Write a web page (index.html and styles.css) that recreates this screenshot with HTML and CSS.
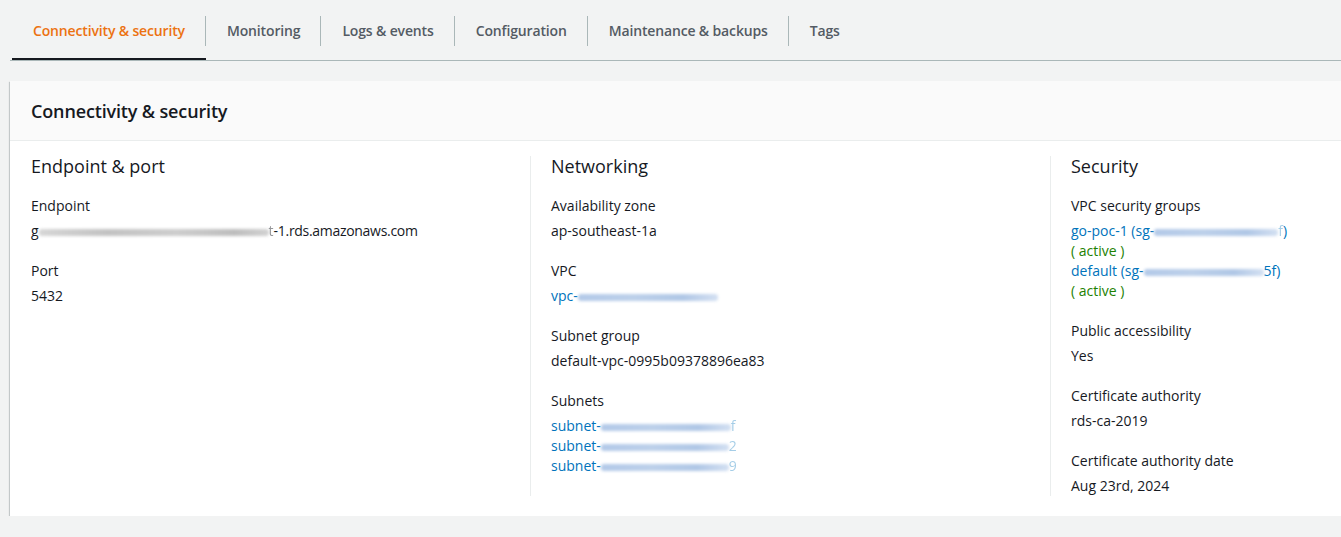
FILE: index.html
```html
<!DOCTYPE html>
<html lang="en">
<head>
<meta charset="utf-8">
<title>Connectivity &amp; security</title>
<link rel="stylesheet" href="styles.css">
</head>
<body>
<div class="page">
  <nav class="tabs">
    <div class="tab active"><span class="tab-label">Connectivity &amp; security</span></div>
    <div class="tab"><span class="tab-label">Monitoring</span></div>
    <div class="tab"><span class="tab-label">Logs &amp; events</span></div>
    <div class="tab"><span class="tab-label">Configuration</span></div>
    <div class="tab"><span class="tab-label">Maintenance &amp; backups</span></div>
    <div class="tab"><span class="tab-label last">Tags</span></div>
  </nav>

  <section class="card">
    <header class="card-header"><h2 class="card-title">Connectivity &amp; security</h2></header>
    <div class="card-body">
      <div class="col">
        <h3 class="col-title">Endpoint &amp; port</h3>
        <div class="items">
          <div class="item">
            <div class="label">Endpoint</div>
            <div class="value">g<span class="blur gray w230"></span><span class="faint-gray">t</span><span class="tight">-1.rds.amazonaws.com</span></div>
          </div>
          <div class="item">
            <div class="label">Port</div>
            <div class="value">5432</div>
          </div>
        </div>
      </div>

      <div class="col">
        <h3 class="col-title">Networking</h3>
        <div class="items">
          <div class="item">
            <div class="label">Availability zone</div>
            <div class="value">ap-southeast-1a</div>
          </div>
          <div class="item">
            <div class="label">VPC</div>
            <div class="value link">vpc-<span class="blur blue w140"></span></div>
          </div>
          <div class="item">
            <div class="label">Subnet group</div>
            <div class="value">default-vpc-0995b09378896ea83</div>
          </div>
          <div class="item">
            <div class="label">Subnets</div>
            <div class="value">
              <div class="link">subnet-<span class="blur blue w130"></span><span class="faint">f</span></div>
              <div class="link">subnet-<span class="blur blue w128"></span><span class="faint">2</span></div>
              <div class="link">subnet-<span class="blur blue w128"></span><span class="faint">9</span></div>
            </div>
          </div>
        </div>
      </div>

      <div class="col">
        <h3 class="col-title">Security</h3>
        <div class="items">
          <div class="item">
            <div class="label">VPC security groups</div>
            <div class="value">
              <div class="link">go-poc-1 (sg-<span class="blur blue w124"></span><span class="faint">f</span>)</div>
              <div class="status">( active )</div>
              <div class="link">default (sg-<span class="blur blue w120"></span>5f)</div>
              <div class="status">( active )</div>
            </div>
          </div>
          <div class="item">
            <div class="label">Public accessibility</div>
            <div class="value">Yes</div>
          </div>
          <div class="item">
            <div class="label">Certificate authority</div>
            <div class="value">rds-ca-2019</div>
          </div>
          <div class="item">
            <div class="label">Certificate authority date</div>
            <div class="value">Aug 23rd, 2024</div>
          </div>
        </div>
      </div>
    </div>
  </section>
</div>
</body>
</html>
```

FILE: styles.css
```css
html, body {
  margin: 0;
  padding: 0;
  overflow: hidden;
  background: #f2f3f3;
}

body {
  font-family: "Open Sans", "Liberation Sans", Arial, sans-serif;
  font-size: 14px;
  line-height: 20px;
  color: #16191f;
}

.page {
  width: 1420px;
  padding-left: 10px;
}

/* Tabs */
.tabs {
  display: flex;
  height: 60px;
  padding-left: 2px;
  border-bottom: 1px solid #aab7b8;
}

.tab {
  box-sizing: border-box;
  height: 60px;
  padding-top: 16px;
  border-bottom: 2px solid transparent;
}

.tab.active {
  border-bottom-color: #16191f;
}

.tab-label {
  display: block;
  height: 30px;
  line-height: 30px;
  padding: 0 20px 0 21px;
  border-right: 1px solid #aab7b8;
  font-weight: 600;
  letter-spacing: -0.15px;
  color: #545b64;
  white-space: nowrap;
}

.tab-label.last {
  border-right: none;
}

.tab.active .tab-label {
  color: #ec7211;
}

/* Card */
.card {
  margin-top: 20px;
  width: 1400px;
  background: #ffffff;
  box-shadow: 0 1px 1px 0 rgba(0, 28, 36, 0.3),
              1px 1px 1px 0 rgba(0, 28, 36, 0.15),
              -1px 1px 1px 0 rgba(0, 28, 36, 0.15);
}

.card-header {
  background: #fafafa;
  border-bottom: 1px solid #eaeded;
  padding: 19px 20px 18px 21px;
}

.card-title {
  margin: 0;
  font-size: 18px;
  line-height: 22px;
  font-weight: 600;
  letter-spacing: -0.15px;
}

.card-body {
  display: grid;
  grid-template-columns: 520px 520px 360px;
  padding: 15px 0 20px 0;
}

.col {
  padding: 0 20px 0 21px;
}

.col + .col {
  border-left: 1px solid #eaeded;
  padding-left: 20px;
}

.col-title {
  margin: 0 0 20px 0;
  font-size: 18px;
  line-height: 20px;
  font-weight: 400;
}

.items {
  display: flex;
  flex-direction: column;
  gap: 20px;
}

.label {
  line-height: 20px;
}

.value {
  margin-top: 5px;
  line-height: 20px;
  white-space: nowrap;
}

.tight {
  letter-spacing: -0.3px;
}

.link {
  color: #0073bb;
}

.status {
  color: #1d8102;
}

.faint {
  opacity: 0.35;
  filter: blur(0.6px);
}

.faint-gray {
  opacity: 0.45;
  filter: blur(0.6px);
}

.blur {
  display: inline-block;
  height: 7px;
  vertical-align: middle;
  border-radius: 3px;
  filter: blur(1.8px);
}

.blur.gray {
  background: linear-gradient(90deg, #d6d6d6, #c2c2c2 30%, #cdcdcd 60%, #bdbdbd 85%, #d2d2d2);
}

.blur.blue {
  background: linear-gradient(90deg, #b3c9e8, #bcd0ea 40%, #b0c7e6 75%, #d3e0f2);
}

.w230 { width: 230px; }
.w140 { width: 140px; }
.w130 { width: 130px; }
.w128 { width: 128px; }
.w124 { width: 124px; }
.w120 { width: 120px; }
```
